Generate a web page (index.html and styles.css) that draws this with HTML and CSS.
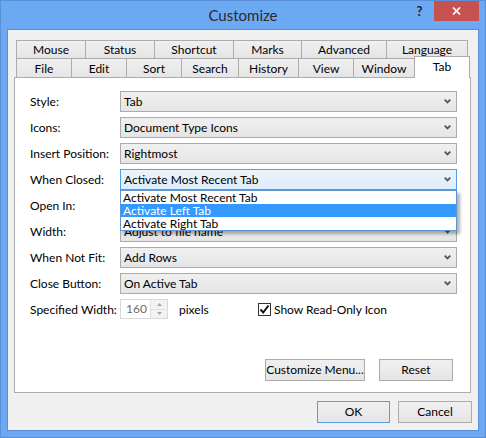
FILE: index.html
```html
<!DOCTYPE html>
<html>
<head>
<meta charset="utf-8">
<link rel="stylesheet" href="styles.css">
</head>
<body>
<div class="window">
  <div class="titlebar">
    <div></div>
    <div class="title">Customize</div>
    <div class="controls">
      <div class="help">?</div>
      <div class="close"><svg width="9" height="8" viewBox="0 0 9 8"><path d="M1 0.5 L8 7.5 M8 0.5 L1 7.5" stroke="#fff" stroke-width="1.7" fill="none"/></svg></div>
    </div>
  </div>
  <div class="client">
    <div class="tabctl">
      <div class="tabrow row1">
        <div class="tab w70">Mouse</div>
        <div class="tab w70">Status</div>
        <div class="tab w80">Shortcut</div>
        <div class="tab w69">Marks</div>
        <div class="tab w86">Advanced</div>
        <div class="tab w82">Language</div>
      </div>
      <div class="tabrow row2">
        <div class="tab w56">File</div>
        <div class="tab w56">Edit</div>
        <div class="tab w56">Sort</div>
        <div class="tab w58">Search</div>
        <div class="tab w61">History</div>
        <div class="tab w56">View</div>
        <div class="tab w62">Window</div>
        <div class="tab w56 sel">Tab</div>
      </div>
      <div class="panel">
        <div class="form">
          <div class="label">Style:</div>
          <div class="combo"><span>Tab</span><svg class="chev" width="7" height="5" viewBox="0 0 7 5"><path d="M0.7 0.7 L3.5 3.5 L6.3 0.7" stroke="#555" stroke-width="1.8" fill="none"/></svg></div>
          <div class="label">Icons:</div>
          <div class="combo"><span>Document Type Icons</span><svg class="chev" width="7" height="5" viewBox="0 0 7 5"><path d="M0.7 0.7 L3.5 3.5 L6.3 0.7" stroke="#555" stroke-width="1.8" fill="none"/></svg></div>
          <div class="label">Insert Position:</div>
          <div class="combo"><span>Rightmost</span><svg class="chev" width="7" height="5" viewBox="0 0 7 5"><path d="M0.7 0.7 L3.5 3.5 L6.3 0.7" stroke="#555" stroke-width="1.8" fill="none"/></svg></div>
          <div class="label">When Closed:</div>
          <div class="combo focus"><span>Activate Most Recent Tab</span><svg class="chev" width="7" height="5" viewBox="0 0 7 5"><path d="M0.7 0.7 L3.5 3.5 L6.3 0.7" stroke="#555" stroke-width="1.8" fill="none"/></svg>
            <div class="droplist">
              <div class="item">Activate Most Recent Tab</div>
              <div class="item hl">Activate Left Tab</div>
              <div class="item">Activate Right Tab</div>
            </div>
          </div>
          <div class="label">Open In:</div>
          <div class="combo"><span></span><svg class="chev" width="7" height="5" viewBox="0 0 7 5"><path d="M0.7 0.7 L3.5 3.5 L6.3 0.7" stroke="#555" stroke-width="1.8" fill="none"/></svg></div>
          <div class="label">Width:</div>
          <div class="combo"><span>Adjust to file name</span><svg class="chev" width="7" height="5" viewBox="0 0 7 5"><path d="M0.7 0.7 L3.5 3.5 L6.3 0.7" stroke="#555" stroke-width="1.8" fill="none"/></svg></div>
          <div class="label">When Not Fit:</div>
          <div class="combo"><span>Add Rows</span><svg class="chev" width="7" height="5" viewBox="0 0 7 5"><path d="M0.7 0.7 L3.5 3.5 L6.3 0.7" stroke="#555" stroke-width="1.8" fill="none"/></svg></div>
          <div class="label">Close Button:</div>
          <div class="combo"><span>On Active Tab</span><svg class="chev" width="7" height="5" viewBox="0 0 7 5"><path d="M0.7 0.7 L3.5 3.5 L6.3 0.7" stroke="#555" stroke-width="1.8" fill="none"/></svg></div>
          <div class="label">Specified Width:</div>
          <div class="specrow">
            <div class="spin">
              <div class="spin-val">160</div>
              <div class="spin-btns">
                <div class="spin-btn"><svg width="5" height="3" viewBox="0 0 5 3"><path d="M0 3 L2.5 0 L5 3 Z" fill="#a8a8a8"/></svg></div>
                <div class="spin-btn"><svg width="5" height="3" viewBox="0 0 5 3"><path d="M0 0 L2.5 3 L5 0 Z" fill="#a8a8a8"/></svg></div>
              </div>
            </div>
            <div class="unit">pixels</div>
            <div class="check">
              <div class="box"><svg width="11" height="11" viewBox="0 0 11 11"><path d="M1.5 5.5 L4.2 8.5 L9.5 1.5" stroke="#111" stroke-width="2" fill="none"/></svg></div>
              <span>Show Read-Only Icon</span>
            </div>
          </div>
        </div>
        <div class="panel-buttons">
          <div class="btn wide">Customize Menu...</div>
          <div class="btn">Reset</div>
        </div>
      </div>
    </div>
    <div class="dialog-buttons">
      <div class="btn ok">OK</div>
      <div class="btn cancel">Cancel</div>
    </div>
  </div>
</div>
</body>
</html>
```

FILE: styles.css
```css
* { box-sizing: border-box; }
body { margin: 0; }

.window {
  width: 486px;
  height: 438px;
  background: #6ba9f3;
  border: 1px solid #5a8fd6;
  padding: 0 6px 6px 6px;
  display: flex;
  flex-direction: column;
  font-family: Lato, "Noto Sans", sans-serif;
  font-size: 12px;
  color: #000;
}

.titlebar {
  height: 28px;
  flex: none;
  display: grid;
  grid-template-columns: 1fr auto 1fr;
  align-items: start;
}
.title {
  font-size: 15px;
  line-height: 29px;
  color: #2b2b2b;
}
.controls {
  justify-self: end;
  display: flex;
}
.help {
  width: 29px;
  height: 20px;
  line-height: 20px;
  text-align: center;
  font-weight: bold;
  font-size: 13px;
  color: #222;
}
.close {
  width: 45px;
  height: 20px;
  background: #c75050;
  display: flex;
  align-items: center;
  justify-content: center;
}

.client {
  flex: 1;
  border: 1px solid #5a8fd6;
  background: #f0f0f0;
  padding: 10px 6px 7px 6px;
  display: flex;
  flex-direction: column;
}

.tabctl {
  width: 457px;
  height: 353px;
  display: flex;
  flex-direction: column;
}
.tabrow {
  display: flex;
  margin-left: 2px;
  flex: none;
}
.row1 { height: 18px; }
.row2 { height: 19px; align-items: flex-end; }
.tab {
  border: 1px solid #acacac;
  border-bottom: none;
  margin-right: -1px;
  background: linear-gradient(#f0f0f0, #e5e5e5);
  text-align: center;
  color: #000;
}
.row1 .tab { height: 18px; line-height: 18px; }
.row2 .tab { height: 19px; line-height: 19px; }
.row2 .tab.sel {
  height: 22px;
  line-height: 19px;
  margin-bottom: -1px;
  background: #fff;
  position: relative;
  z-index: 2;
}
.w56 { width: 56px; }
.w58 { width: 58px; }
.w61 { width: 61px; }
.w62 { width: 62px; }
.w69 { width: 69px; }
.w70 { width: 70px; }
.w80 { width: 80px; }
.w82 { width: 82px; }
.w86 { width: 86px; }

.panel {
  height: 316px;
  border: 1px solid #acacac;
  background: #fff;
  display: flex;
  flex-direction: column;
  padding: 13px 13px 11px 15px;
}

.form {
  display: grid;
  grid-template-columns: 90px 337px;
  grid-auto-rows: 21px;
  row-gap: 5px;
}
.label {
  line-height: 21px;
  white-space: nowrap;
}
.combo {
  position: relative;
  height: 21px;
  border: 1px solid #acacac;
  background: linear-gradient(#f0f0f0, #e5e5e5);
  display: flex;
  align-items: center;
  justify-content: space-between;
  padding: 0 5px 0 3px;
  white-space: nowrap;
}
.combo.focus {
  border-color: #569de5;
  background: linear-gradient(#ecf4fc, #dcecfc);
}
.chev { flex: none; }

.droplist {
  position: absolute;
  left: -1px;
  right: -1px;
  top: calc(100% + 1px);
  border: 1px solid #5b96d4;
  background: #fff;
  box-shadow: 3px 3px 3px rgba(0, 0, 0, 0.3);
  z-index: 5;
}
.item {
  height: 13px;
  line-height: 13px;
  padding-left: 2px;
  color: #000;
}
.item.hl {
  background: #3399ff;
  color: #fff;
}

.specrow {
  display: flex;
  align-items: center;
  height: 20px;
}
.spin {
  width: 48px;
  height: 20px;
  border: 1px solid #d9d9d9;
  background: #fff;
  display: flex;
}
.spin-val {
  flex: 1;
  text-align: center;
  line-height: 18px;
  color: #6d6d6d;
  padding-left: 2px;
}
.spin-btns {
  width: 17px;
  display: flex;
  flex-direction: column;
  border-left: 1px solid #e2e2e2;
}
.spin-btn {
  flex: 1;
  display: flex;
  align-items: center;
  justify-content: center;
  background: #f3f3f3;
}
.spin-btn + .spin-btn { border-top: 1px solid #e2e2e2; }
.unit {
  width: 90px;
  padding-left: 11px;
}
.check {
  display: flex;
  align-items: center;
  gap: 3px;
}
.box {
  width: 13px;
  height: 13px;
  border: 1px solid #333;
  background: #fff;
  display: flex;
  align-items: center;
  justify-content: center;
}

.panel-buttons {
  margin-top: auto;
  display: flex;
  justify-content: flex-end;
  gap: 14px;
  padding-right: 4px;
}
.btn {
  width: 74px;
  height: 22px;
  border: 1px solid #acacac;
  background: linear-gradient(#f0f0f0, #e5e5e5);
  text-align: center;
  line-height: 20px;
  color: #000;
}
.btn.wide { width: 100px; }
.dialog-buttons {
  margin-top: 8px;
  display: flex;
  justify-content: flex-end;
  gap: 8px;
}
.btn.ok {
  width: 73px;
  border-color: #569de5;
}
```
